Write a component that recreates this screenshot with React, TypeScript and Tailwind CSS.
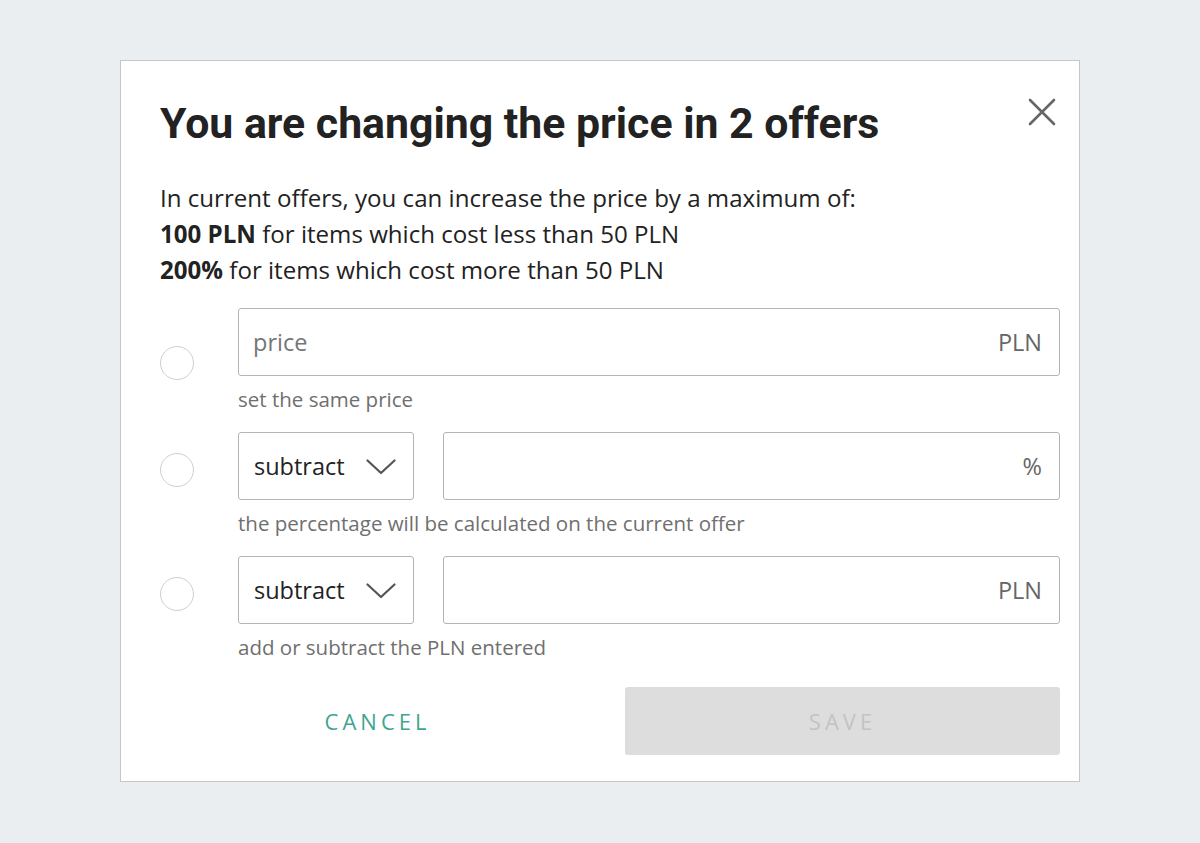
import { useState } from "react";

type Row = {
  kind: "price" | "percent" | "amount";
  helper: string;
  suffix: string;
  radioOffset: string;
};

const rows: Row[] = [
  { kind: "price", helper: "set the same price", suffix: "PLN", radioOffset: "mt-[38px]" },
  { kind: "percent", helper: "the percentage will be calculated on the current offer", suffix: "%", radioOffset: "mt-[21px]" },
  { kind: "amount", helper: "add or subtract the PLN entered", suffix: "PLN", radioOffset: "mt-[21px]" },
];

function Chevron() {
  return (
    <svg width="30" height="16" viewBox="0 0 30 16" fill="none" className="shrink-0">
      <path d="M1.5 1.5 L15 14 L28.5 1.5" stroke="#555" strokeWidth="2.2" strokeLinecap="round" strokeLinejoin="round" />
    </svg>
  );
}

function CloseIcon() {
  return (
    <svg width="28" height="28" viewBox="0 0 28 28" fill="none">
      <path d="M2 2 L26 26 M26 2 L2 26" stroke="#666" strokeWidth="2.6" strokeLinecap="round" />
    </svg>
  );
}

function OptionRow({ row, selected, onSelect }: { row: Row; selected: boolean; onSelect: () => void }) {
  return (
    <div className="flex">
      <div className="w-[78px] shrink-0">
        <button
          type="button"
          onClick={onSelect}
          className={`${row.radioOffset} block h-[34px] w-[34px] rounded-full border border-[#cfcfcf] bg-white`}
        >
          {selected && <span className="m-auto block h-[16px] w-[16px] rounded-full bg-[#3fa58f]" />}
        </button>
      </div>
      <div className="flex flex-1 flex-col">
        <div className="flex gap-[29px]">
          {row.kind !== "price" && (
            <div className="flex h-[68px] w-[176px] shrink-0 items-center justify-between rounded-[3px] border border-[#b4b4b4] pl-[15px] pr-[17px] pt-[2px] text-[23.5px] text-[#222]">
              <span>subtract</span>
              <Chevron />
            </div>
          )}
          <div className="flex h-[68px] flex-1 items-center justify-between rounded-[3px] border border-[#b4b4b4] pl-[14px] pr-[17px] pt-[2px] text-[23.5px]">
            <span className="text-[#757575]">{row.kind === "price" ? "price" : ""}</span>
            <span className="text-[#666]">{row.suffix}</span>
          </div>
        </div>
        <p className="mt-[10px] text-[20.5px] leading-[26px] text-[#6f6f6f]">{row.helper}</p>
      </div>
    </div>
  );
}

export default function App() {
  const [selected, setSelected] = useState<number | null>(null);

  return (
    <div className="flex min-h-screen justify-center bg-[#ebeef1] pt-[60px] font-['Open_Sans',sans-serif]">
      <div className="h-[722px] w-[960px] border border-[#c6c6c6] bg-white pb-[26px] pl-[39px] pr-[19px] pt-[38px]">
        <div className="flex items-start justify-between">
          <h1 className="font-['Roboto',sans-serif] text-[42.8px] font-bold leading-[48px] text-[#222]">
            You are changing the price in 2 offers
          </h1>
          <button type="button" className="mr-[4px] mt-[-1px]">
            <CloseIcon />
          </button>
        </div>

        <div className="mt-[33px] text-[24.1px] leading-[36px] text-[#222]">
          <p>In current offers, you can increase the price by a maximum of:</p>
          <p>
            <b>100 PLN</b> for items which cost less than 50 PLN
          </p>
          <p>
            <b>200%</b> for items which cost more than 50 PLN
          </p>
        </div>

        <div className="mt-[20px] flex flex-col gap-[20px]">
          {rows.map((row, i) => (
            <OptionRow key={row.kind} row={row} selected={selected === i} onSelect={() => setSelected(i)} />
          ))}
        </div>

        <div className="mt-[27px] grid grid-cols-2 gap-[30px]">
          <button type="button" className="h-[68px] text-[22px] tracking-[4px] text-[#3fa58f]">
            CANCEL
          </button>
          <button type="button" disabled className="h-[68px] rounded-[3px] bg-[#dddddd] text-[22px] tracking-[4px] text-[#c3c3c3]">
            SAVE
          </button>
        </div>
      </div>
    </div>
  );
}
